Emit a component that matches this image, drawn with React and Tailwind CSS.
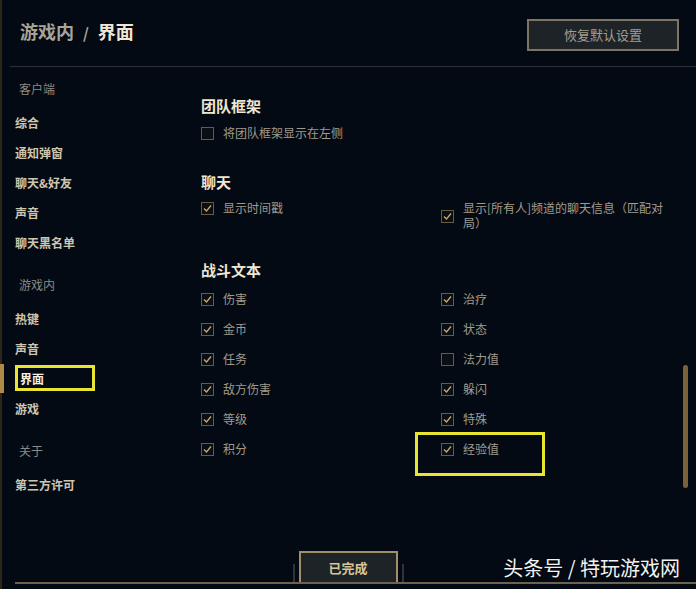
import React from 'react'

const font = { fontFamily: '"Noto Sans CJK SC", "Noto Sans", sans-serif' }

function Box({ checked }) {
    return (
        <span className="w-[13px] h-[13px] shrink-0 border border-[#6b5b3e] bg-[#0a0f16] flex items-center justify-center">
            {checked && (
                <svg width="11" height="11" viewBox="0 0 11 11">
                    <path d="M2 5.5 L4.5 8 L9 2.5" fill="none" stroke="#c8aa6e" strokeWidth="1.3" />
                </svg>
            )}
        </span>
    )
}

function Check({ label, checked = true }) {
    return (
        <div className="h-[30px] flex items-center gap-[9px]">
            <Box checked={checked} />
            <span className="text-[12px] leading-[16px] text-[#a09b8c]">{label}</span>
        </div>
    )
}

function NavLabel({ text, first }) {
    return <div className={`h-[30px] leading-[30px] pl-[17px] text-[12px] text-[#8c8a84] ${first ? '' : 'mt-[12px]'}`}>{text}</div>
}

function NavItem({ text, active }) {
    if (active) {
        return (
            <div className="relative h-[30px] leading-[30px] pl-[18px] text-[12px] font-bold text-[#f6f0e2]">
                <span className="absolute -left-[2px] top-0 w-[4px] h-[29px] bg-[#b08a45]" />
                {text}
            </div>
        )
    }
    return <div className="h-[30px] leading-[30px] pl-[13px] text-[12px] font-bold text-[#cfc6b0]">{text}</div>
}

const combat = [
    ['伤害', true, '治疗', true],
    ['金币', true, '状态', true],
    ['任务', true, '法力值', false],
    ['敌方伤害', true, '躲闪', true],
    ['等级', true, '特殊', true],
    ['积分', true, '经验值', true],
]

export default function App() {
    return (
        <div style={font} className="relative w-[696px] h-[589px] bg-[#030a14] overflow-hidden flex">
            <div className="w-[2px] h-full bg-[#2e2718]" />
            <div className="flex-1 flex flex-col">
                {/* header */}
                <div className="h-[67px] ml-[8px] border-b border-[#2b3038] flex items-start justify-between pt-[19px] pr-[17px]">
                    <div className="pl-[10px] text-[18px] leading-[24px] font-bold">
                        <span className="text-[#a9a497]">游戏内</span>
                        <span className="text-[#a9a497] mx-[9px] text-[15px]">/</span>
                        <span className="text-[#f0e6d2]">界面</span>
                    </div>
                    <button className="w-[152px] h-[32px] border-2 border-[#7c7565] bg-[#1e2328] text-[13px] text-[#a39e8f]">恢复默认设置</button>
                </div>

                {/* body */}
                <div className="h-[481px] flex">
                    <div className="w-[178px] pt-[7px]">
                        <NavLabel text="客户端" first />
                        <div className="mt-[4px]">
                            <NavItem text="综合" />
                            <NavItem text="通知弹窗" />
                            <NavItem text="聊天&好友" />
                            <NavItem text="声音" />
                            <NavItem text="聊天黑名单" />
                        </div>
                        <NavLabel text="游戏内" />
                        <div className="mt-[4px]">
                            <NavItem text="热键" />
                            <NavItem text="声音" />
                            <NavItem text="界面" active />
                            <NavItem text="游戏" />
                        </div>
                        <NavLabel text="关于" />
                        <div className="mt-[4px]">
                            <NavItem text="第三方许可" />
                        </div>
                    </div>

                    <div className="flex-1 pl-[21px] pt-[29px]">
                        <div className="text-[15px] leading-[20px] font-bold text-[#f0e6d2]">团队框架</div>
                        <div className="mt-[2px]">
                            <Check label="将团队框架显示在左侧" checked={false} />
                        </div>

                        <div className="mt-[24px] text-[15px] leading-[20px] font-bold text-[#f0e6d2]">聊天</div>
                        <div className="mt-[1px] grid grid-cols-[240px_1fr]">
                            <div className="self-start">
                                <Check label="显示时间戳" />
                            </div>
                            <div className="flex items-center gap-[9px] pt-[7px]">
                                <span className="mt-[3px]"><Box checked /></span>
                                <span className="w-[212px] text-[12px] leading-[15px] text-[#a09b8c]">显示[所有人]频道的聊天信息（匹配对局）</span>
                            </div>
                        </div>

                        <div className="mt-[30px] text-[15px] leading-[20px] font-bold text-[#f0e6d2]">战斗文本</div>
                        <div className="mt-[4px] grid grid-cols-[240px_1fr]">
                            {combat.map(([a, ac, b, bc]) => (
                                <React.Fragment key={a}>
                                    <Check label={a} checked={ac} />
                                    <Check label={b} checked={bc} />
                                </React.Fragment>
                            ))}
                        </div>
                    </div>
                </div>

                {/* footer */}
                <div className="h-[34px] flex items-end justify-center gap-[4px] -ml-[2px]">
                    <span className="w-[2px] h-[18px] bg-[#2f343b]" />
                    <button className="w-[99px] h-[31px] border-2 border-b-0 border-[#a08f6c] bg-[#1e2328] text-[13px] font-bold text-[#d8c497]">已完成</button>
                    <span className="w-[2px] h-[18px] bg-[#2f343b]" />
                </div>
                <div className="h-[2px] ml-[13px] bg-[#6d6150]" />
            </div>

            {/* scrollbar */}
            <div className="absolute left-[683px] top-[365px] w-[5px] h-[123px] rounded-sm bg-[#7a6136]" />

            {/* annotation boxes */}
            <div className="absolute left-[15px] top-[365px] w-[80px] h-[26px] border-[3px] border-[#e8e430]" />
            <div className="absolute left-[415px] top-[432px] w-[130px] h-[44px] border-[3px] border-[#e8e430]" />

            {/* watermark */}
            <div className="absolute right-[16px] bottom-[8px] text-[20px] leading-[26px] text-[#f2f2f2] [text-shadow:0_1px_2px_rgba(0,0,0,0.8)]">头条号 / 特玩游戏网</div>
        </div>
    )
}
